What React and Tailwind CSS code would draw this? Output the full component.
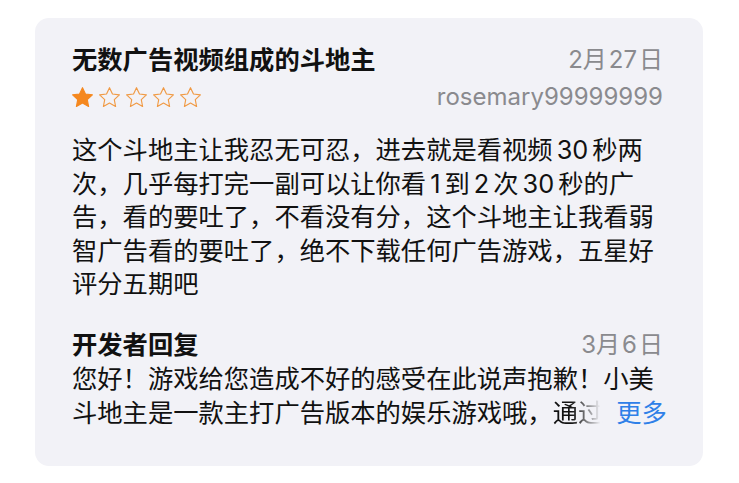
import React from "react";

const FONT = { fontFamily: 'Inter, "Noto Sans CJK SC", "Noto Sans", sans-serif' };

function Star({ filled }) {
  return (
    <svg width="25" height="25" viewBox="0 0 24 24">
      <path
        d="M12 2.6l2.85 6.05 6.65.8-4.9 4.6 1.25 6.6L12 17.35l-5.85 3.3 1.25-6.6-4.9-4.6 6.65-.8z"
        fill={filled ? "#f5881f" : "none"}
        stroke={filled ? "#f5881f" : "#f09a45"}
        strokeWidth="1.1"
        strokeLinejoin="round"
      />
    </svg>
  );
}

function D({ children }) {
  return <span className="mx-[4px]">{children}</span>;
}

function S({ children }) {
  return <span className="mx-[2px]">{children}</span>;
}

export default function App() {
  return (
    <div className="w-[739px] h-[483px] bg-white px-[35px] py-[18px]" style={FONT}>
      <div className="w-[668px] h-[448px] rounded-[14px] bg-[#f2f2f7] pl-[37px] pr-[40px] pt-[25px] pb-[33px] flex flex-col">
        <div className="flex items-center justify-between leading-[34px]">
          <div className="text-[25.3px] font-semibold text-[#111]">无数广告视频组成的斗地主</div>
          <div className="text-[24px] text-[#8a8a8e]">2月<S>27</S>日</div>
        </div>
        <div className="mt-[3px] flex items-center justify-between h-[34px]">
          <div className="flex items-center gap-[2px] -ml-[2px]">
            <Star filled />
            <Star />
            <Star />
            <Star />
            <Star />
          </div>
          <div className="text-[24px] text-[#8a8a8e] leading-[34px]">rosemary99999999</div>
        </div>
        <div className="mt-[19px] text-[25.3px] leading-[33.5px] text-[#111] whitespace-nowrap">
          这个斗地主让我忍无可忍，进去就是看视频<D>30</D>秒两
          <br />
          次，几乎每打完一副可以让你看<D>1</D>到<D>2</D>次<D>30</D>秒的广
          <br />
          告，看的要吐了，不看没有分，这个斗地主让我看弱
          <br />
          智广告看的要吐了，绝不下载任何广告游戏，五星好
          <br />
          评分五期吧
        </div>
        <div className="mt-[27px] flex items-center justify-between leading-[34px]">
          <div className="text-[25.3px] font-semibold text-[#111]">开发者回复</div>
          <div className="text-[24px] text-[#8a8a8e]">3月<S>6</S>日</div>
        </div>
        <div className="text-[25.3px] leading-[34px] text-[#111] whitespace-nowrap">
          <div>您好！游戏给您造成不好的感受在此说声抱歉！小美</div>
          <div className="flex items-center">
            <span>斗地主是一款主打广告版本的娱乐游戏哦，</span>
            <span className="bg-gradient-to-r from-[#111] from-[35%] to-[#f2f2f7] to-[95%] bg-clip-text text-transparent">通过</span>
            <span className="ml-[13px] text-[#2f80e8]">更多</span>
          </div>
        </div>
      </div>
    </div>
  );
}
